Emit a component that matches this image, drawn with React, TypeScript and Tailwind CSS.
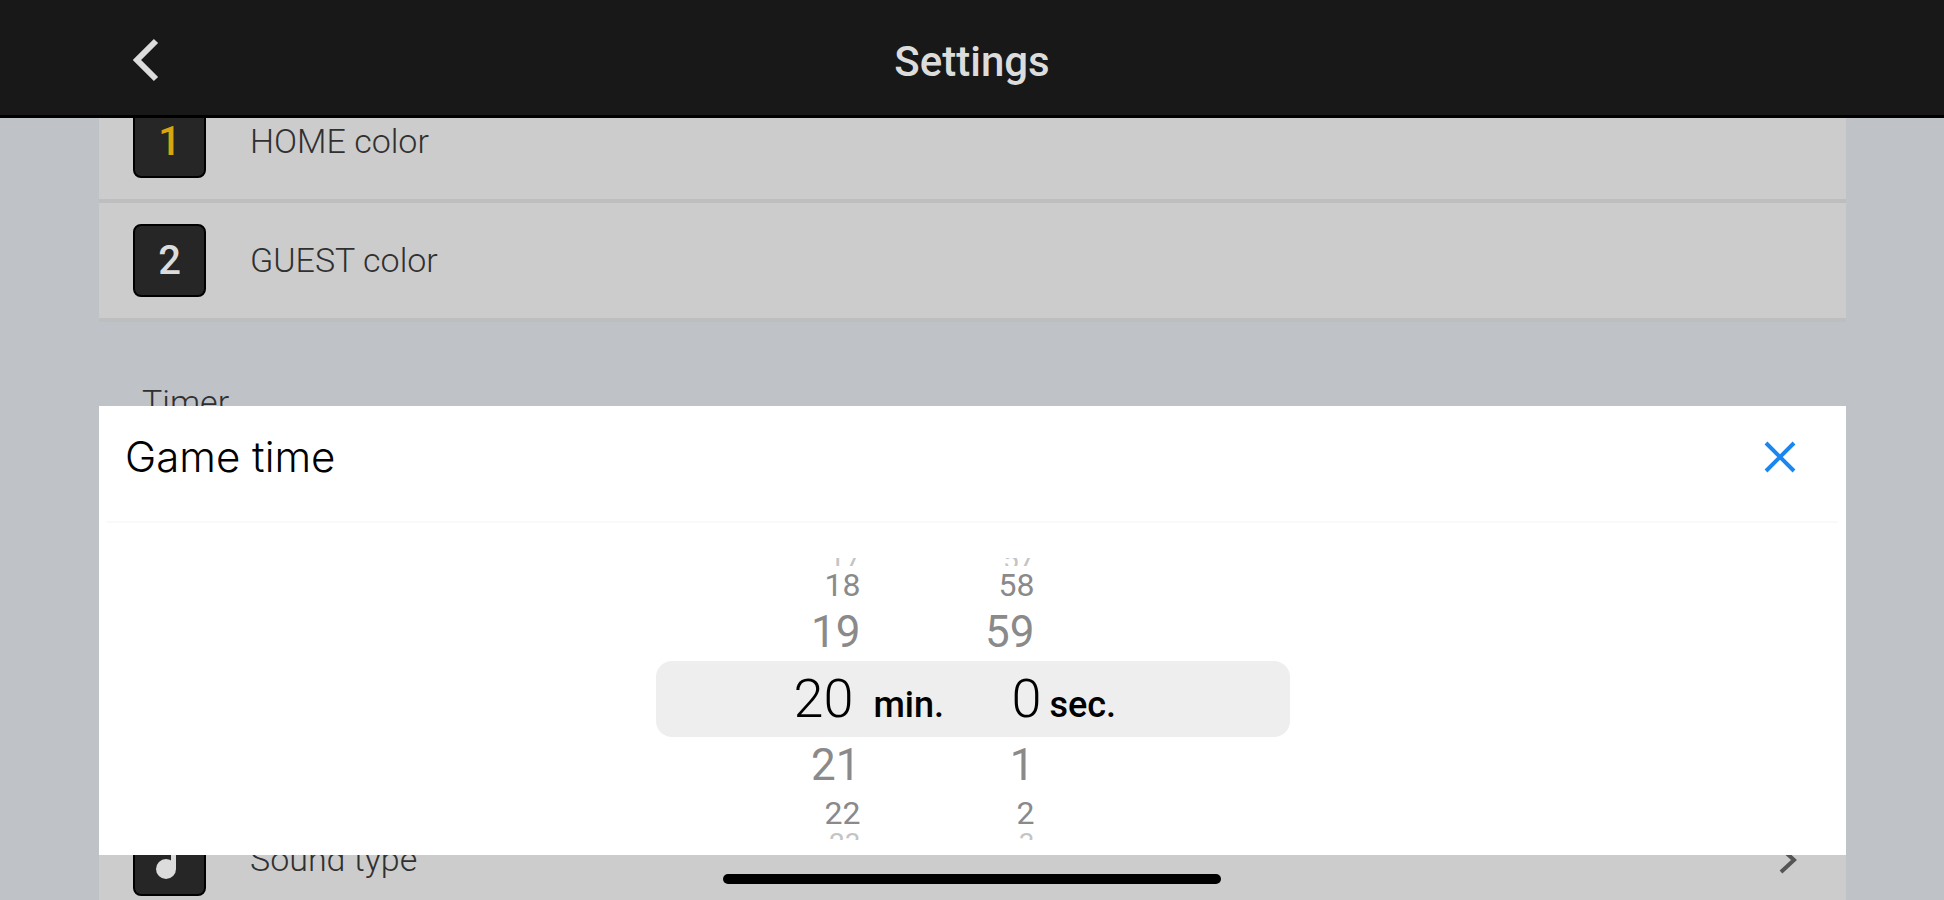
import type { ReactNode } from "react";

function Tile({ children }: { children: ReactNode }) {
  return (
    <span className="flex size-[73px] shrink-0 items-center justify-center rounded-lg border-2 border-black bg-[#262626] text-[40px] leading-none font-medium text-[#dcdcdc]">
      {children}
    </span>
  );
}

function Row({ icon, label, chevron }: { icon: ReactNode; label: string; chevron?: boolean }) {
  return (
    <button
      type="button"
      className="flex h-[119px] w-full shrink-0 items-center gap-11 border-b-4 border-[#bcbebf] bg-[#cccccc] pr-12 pl-[34px] text-left text-[34px] font-light text-[#303030]"
    >
      <Tile>{icon}</Tile>
      <span className="flex-1">{label}</span>
      {chevron && (
        <svg width="20" height="28" viewBox="0 0 20 28" fill="none" stroke="#555" strokeWidth="4" aria-hidden="true">
          <path d="M3 2l13 12L3 26" />
        </svg>
      )}
    </button>
  );
}

function WheelRow({ min, sec, className }: { min: string; sec: string; className: string }) {
  return (
    <div className={"flex w-full shrink-0 overflow-hidden " + className}>
      <button type="button" className="w-[205px] text-right">
        {min}
      </button>
      <button type="button" className="w-[174px] text-right">
        {sec}
      </button>
    </div>
  );
}

export default function App() {
  return (
    <div className="relative flex h-screen flex-col overflow-hidden bg-[#bfc3c8] font-['Roboto',sans-serif]">
      <header className="z-10 grid h-[118px] shrink-0 grid-cols-[1fr_auto_1fr] items-center border-b-3 border-black bg-[#181818] px-[130px] pt-2 text-[#dcdcdc]">
        <button type="button" aria-label="Back" className="w-8">
          <svg width="32" height="48" viewBox="0 0 32 48" fill="none" stroke="currentColor" strokeWidth="6" aria-hidden="true">
            <path d="M26 3L7 22l19 19" />
          </svg>
        </button>
        <h1 className="text-[42px] font-medium">Settings</h1>
      </header>

      <main className="flex flex-1 flex-col overflow-hidden pr-[98px] pl-[99px]">
        <div className="-mt-[34px] flex flex-col">
          <Row icon={<span className="text-[#d9a410]">1</span>} label="HOME color" />
          <Row icon="2" label="GUEST color" />
          <h2 className="h-[480px] pt-[55px] pl-[43px] text-[34px] font-light text-[#303030]">Timer</h2>
          <Row
            icon={
              <svg width="44" height="48" viewBox="0 0 44 48" fill="currentColor" aria-hidden="true">
                <circle cx="18" cy="33" r="10" />
                <path d="M23 4h14v9h-9v20h-5z" />
              </svg>
            }
            label="Sound type"
            chevron
          />
        </div>
      </main>

      <section
        role="dialog"
        aria-label="Game time"
        className="absolute right-[98px] bottom-[45px] left-[99px] z-20 flex h-[449px] flex-col bg-white px-2 text-black"
      >
        <div className="flex h-[117px] shrink-0 items-start justify-between border-b-2 border-[#f9f9f9] pt-[26px] pr-[42px] pl-[18px]">
          <h2 className="font-['Inter',sans-serif] text-[42px] leading-[50px] font-light">Game time</h2>
          <button type="button" aria-label="Close" className="mt-[9px]">
            <svg width="32" height="32" viewBox="0 0 32 32" fill="none" stroke="#1a86f0" strokeWidth="4" aria-hidden="true">
              <path d="M2 2l28 28M30 2L2 30" />
            </svg>
          </button>
        </div>

        <div className="mx-auto mt-[35px] flex w-[634px] flex-col text-[#8a8a8a]">
          <WheelRow min="17" sec="57" className="h-2 items-end text-[28px] leading-[13px] text-[#c4c4c4]" />
          <WheelRow min="18" sec="58" className="h-[38px] text-[32px] leading-[36px]" />
          <WheelRow min="19" sec="59" className="h-[57px] text-[44px] leading-[55px]" />
          <div className="flex h-[76px] w-full shrink-0 items-baseline rounded-2xl bg-[#eeeeee] text-[54px] leading-[75px] text-black">
            <span className="w-[198px] text-right font-light">20</span>
            <span className="w-[90px] pl-5 text-4xl leading-[75px] font-medium">min.</span>
            <span className="w-[98px] text-right font-light">0</span>
            <span className="pl-2 text-4xl leading-[75px] font-medium">sec.</span>
          </div>
          <WheelRow min="21" sec="1" className="h-[57px] text-[44px] leading-[55px]" />
          <WheelRow min="22" sec="2" className="h-[38px] text-[32px] leading-[38px]" />
          <WheelRow min="23" sec="3" className="h-2 items-start text-[28px] leading-[24px] text-[#c4c4c4]" />
        </div>
      </section>

      <div className="absolute bottom-4 left-1/2 z-30 h-[10px] w-[498px] -translate-x-1/2 rounded-full bg-black" />
    </div>
  );
}
